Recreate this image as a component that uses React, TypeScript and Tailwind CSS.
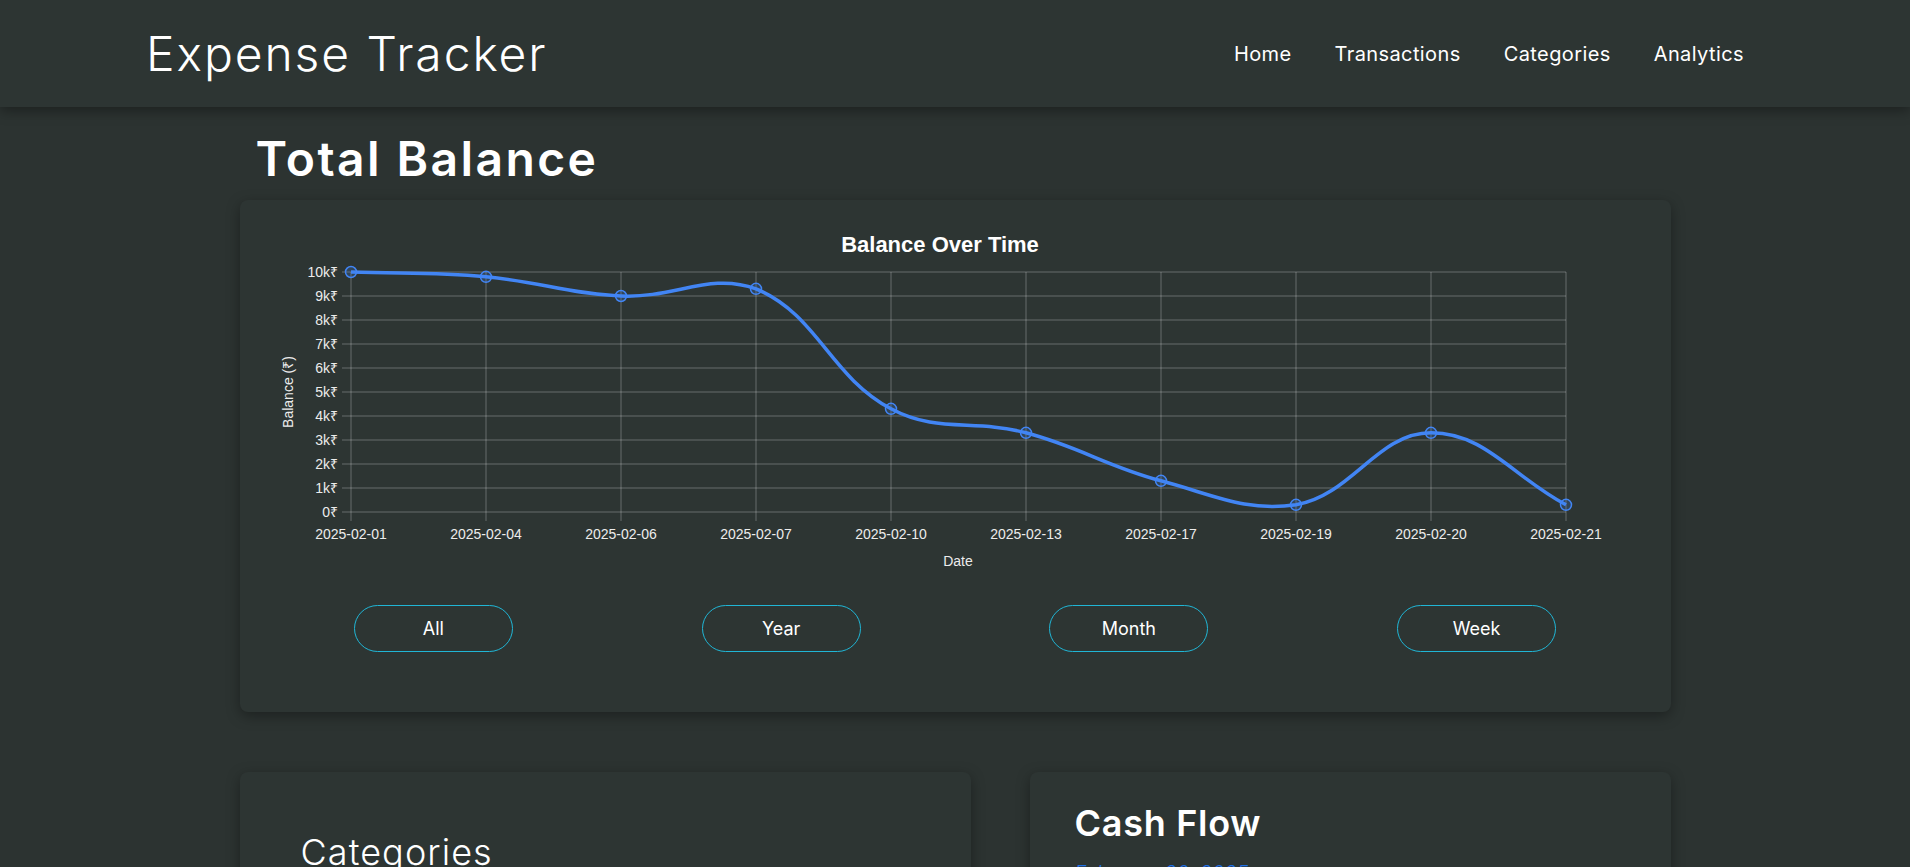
import React from "react";

const dates = [
  "2025-02-01",
  "2025-02-04",
  "2025-02-06",
  "2025-02-07",
  "2025-02-10",
  "2025-02-13",
  "2025-02-17",
  "2025-02-19",
  "2025-02-20",
  "2025-02-21",
];
const values = [10000, 9800, 9000, 9300, 4300, 3300, 1300, 300, 3300, 300];

const X0 = 111;
const DX = 135;
const TOP = 72;
const BOTTOM = 312;
const K = (BOTTOM - TOP) / 10000;
const RIGHT = X0 + DX * (values.length - 1);

type P = { x: number; y: number };

function buildPath(): { d: string; pts: P[] } {
  const pts: P[] = values.map((v, i) => ({ x: X0 + i * DX, y: BOTTOM - v * K }));
  const T = 0.4;
  const clamp = (p: P): P => ({
    x: Math.min(Math.max(p.x, X0), RIGHT),
    y: Math.min(Math.max(p.y, TOP), BOTTOM),
  });
  const cps = pts.map((p, i) => {
    const prev = pts[i - 1] ?? p;
    const next = pts[i + 1] ?? p;
    const d01 = Math.hypot(p.x - prev.x, p.y - prev.y);
    const d12 = Math.hypot(next.x - p.x, next.y - p.y);
    let s01 = d01 / (d01 + d12);
    let s12 = d12 / (d01 + d12);
    if (isNaN(s01)) s01 = 0;
    if (isNaN(s12)) s12 = 0;
    const fa = T * s01;
    const fb = T * s12;
    return {
      prev: clamp({ x: p.x - fa * (next.x - prev.x), y: p.y - fa * (next.y - prev.y) }),
      next: clamp({ x: p.x + fb * (next.x - prev.x), y: p.y + fb * (next.y - prev.y) }),
    };
  });
  let d = `M${pts[0].x},${pts[0].y}`;
  for (let i = 1; i < pts.length; i++) {
    const a = cps[i - 1].next;
    const b = cps[i].prev;
    d += ` C${a.x.toFixed(2)},${a.y.toFixed(2)} ${b.x.toFixed(2)},${b.y.toFixed(2)} ${pts[i].x},${pts[i].y.toFixed(2)}`;
  }
  return { d, pts };
}

function BalanceChart() {
  const { d, pts } = buildPath();
  const grid = "rgba(255,255,255,0.28)";
  const ticks = Array.from({ length: 11 }, (_, i) => i);
  return (
    <svg width={1431} height={380} className="block" style={{ fontFamily: '"Liberation Sans", Arial, sans-serif' }}>
      <text x={700} y={52} textAnchor="middle" fill="#ffffff" fontSize={22} fontWeight={700}>
        Balance Over Time
      </text>
      {ticks.map((t) => {
        const y = BOTTOM - t * 1000 * K;
        return (
          <g key={t}>
            <line x1={102} x2={RIGHT} y1={y} y2={y} stroke={grid} strokeWidth={1} />
            <text x={98} y={y + 5} textAnchor="end" fill="#ececec" fontSize={14}>
              {t === 0 ? "0₹" : `${t}k₹`}
            </text>
          </g>
        );
      })}
      {pts.map((p, i) => (
        <g key={i}>
          <line x1={p.x} x2={p.x} y1={TOP} y2={BOTTOM + 9} stroke={grid} strokeWidth={1} />
          <text x={p.x} y={339} textAnchor="middle" fill="#ececec" fontSize={14}>
            {dates[i]}
          </text>
        </g>
      ))}
      <text
        x={48}
        y={192}
        textAnchor="middle"
        dominantBaseline="central"
        fill="#ececec"
        fontSize={14}
        transform="rotate(-90 48 192)"
      >
        Balance (₹)
      </text>
      <text x={718} y={366} textAnchor="middle" fill="#ececec" fontSize={14}>
        Date
      </text>
      <path d={d} fill="none" stroke="#4285f4" strokeWidth={3.5} strokeLinejoin="round" />
      {pts.map((p, i) => (
        <circle key={i} cx={p.x} cy={p.y} r={5.5} fill="rgba(66,133,244,0.2)" stroke="#4285f4" strokeWidth={1.5} />
      ))}
    </svg>
  );
}

export default function App() {
  const font = { fontFamily: 'Inter, "Open Sans", "Noto Sans", sans-serif' };
  return (
    <div className="min-h-screen bg-[#2c3331] text-white" style={font}>
      <header className="h-[107px] bg-[#2d3533] shadow-[0_4px_12px_rgba(0,0,0,0.35)] flex items-center justify-between pl-[146px] pr-[166px] relative z-10">
        <div className="text-[48px] leading-[1.2] font-light tracking-[0.04em]">Expense Tracker</div>
        <nav className="flex items-center gap-[43px] text-[20px] tracking-[0.02em]">
          <a className="text-white">Home</a>
          <a className="text-white">Transactions</a>
          <a className="text-white">Categories</a>
          <a className="text-white">Analytics</a>
        </nav>
      </header>

      <main className="w-[1431px] mx-auto pt-[23px] pb-20">
        <h1 className="pl-4 text-[48px] leading-[1.2] font-semibold tracking-[0.05em] mb-3">Total Balance</h1>

        <section className="bg-[#2d3533] rounded-lg shadow-[0_4px_14px_rgba(0,0,0,0.35)] pb-[60px]">
          <BalanceChart />
          <div className="grid grid-cols-4 justify-items-center px-5 mt-[25px]">
            {["All", "Year", "Month", "Week"].map((b) => (
              <button
                key={b}
                className="w-[159px] h-[47px] rounded-full border border-[#20b6d6] text-white text-[18px] bg-transparent"
              >
                {b}
              </button>
            ))}
          </div>
        </section>

        <div className="flex gap-[59px] mt-[60px]">
          <section className="w-[731px] min-h-[320px] bg-[#2d3533] rounded-lg shadow-[0_4px_14px_rgba(0,0,0,0.35)] pl-[61px] pt-[59px]">
            <h2 className="text-[36px] leading-[1.2] font-light tracking-[0.03em]">Categories</h2>
          </section>
          <section className="flex-1 min-h-[320px] bg-[#2d3533] rounded-lg shadow-[0_4px_14px_rgba(0,0,0,0.35)] pl-[45px] pt-[30px]">
            <h2 className="text-[36px] leading-[1.2] font-semibold tracking-[0.02em]">Cash Flow</h2>
            <p className="mt-[13px] text-[20px] italic font-light text-[#1f6fe5]">February 20, 2025</p>
          </section>
        </div>
      </main>
    </div>
  );
}
